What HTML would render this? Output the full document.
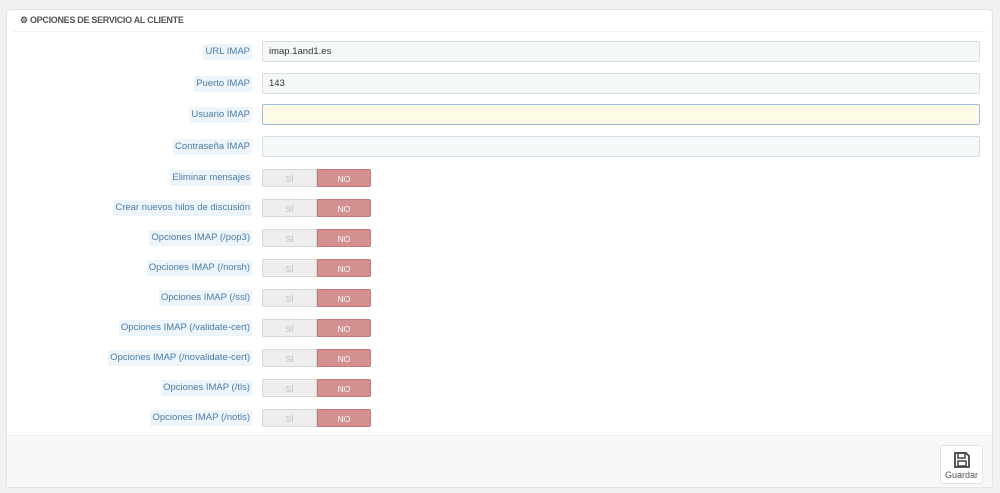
<!DOCTYPE html>
<html><head><style>
body{margin:0;width:1000px;height:493px;background:#eff1f2;font-family:"Liberation Sans",sans-serif;font-size:10px;position:relative;overflow:hidden}
.panel{position:absolute;left:6px;top:9px;width:987px;height:479px;background:#fff;border:1px solid #e1e4e6;border-radius:4px;box-sizing:border-box}
.hd{position:absolute;left:6px;right:6px;top:0;height:21px;border-bottom:1px solid #eef0f1;font-size:9px;font-weight:bold;color:#555;line-height:21px;padding-left:7px;letter-spacing:-.3px}
.ft{position:absolute;left:0;right:0;bottom:0;height:51px;background:#f8f8f8;border-top:1px solid #eee}
.lab{position:absolute;right:748px;height:16px;line-height:16px;padding:0 2px;background:#eef5fa;color:#4a7ca8;font-size:9.5px;white-space:nowrap}
.inp{position:absolute;left:262px;width:718px;height:21px;box-sizing:border-box;background:#f5f8f9;border:1px solid #d8dee2;border-radius:2px;font-size:9.5px;color:#333;line-height:19px;padding-left:6px}
.sw{position:absolute;left:262px;width:109px;height:18px;font-size:8.5px;line-height:18px;text-align:center}
.sw .s{position:absolute;left:0;width:55px;height:18px;background:#eeeeee;border:1px solid #d8d8d8;box-sizing:border-box;border-radius:2px 0 0 2px;color:#bbb}
.sw .n{position:absolute;left:55px;width:54px;height:18px;background:#d48f91;border:1px solid #c47a7c;box-sizing:border-box;border-radius:0 2px 2px 0;color:#fff}
.btn{position:absolute;left:940px;top:445px;width:43px;height:39px;background:#fff;border:1px solid #e2e2e2;border-radius:3px;box-sizing:border-box;text-align:center;font-size:9px;color:#555}
</style></head><body>
<div class="panel"><div class="hd">⚙ OPCIONES DE SERVICIO AL CLIENTE</div><div class="ft"></div></div>
<div class="lab" style="top:44px">URL IMAP</div><div class="inp" style="top:41px">imap.1and1.es</div>
<div class="lab" style="top:76px">Puerto IMAP</div><div class="inp" style="top:73px">143</div>
<div class="lab" style="top:107px">Usuario IMAP</div><div class="inp" style="top:104px;background:#fdfbe5;border-color:#9fc0dd"></div>
<div class="lab" style="top:139px">Contraseña IMAP</div><div class="inp" style="top:136px"></div>
<div class="lab" style="top:170px">Eliminar mensajes</div><div class="sw" style="top:169px"><div class="s">SÍ</div><div class="n">NO</div></div>
<div class="lab" style="top:200px">Crear nuevos hilos de discusión</div><div class="sw" style="top:199px"><div class="s">SÍ</div><div class="n">NO</div></div>
<div class="lab" style="top:230px">Opciones IMAP (/pop3)</div><div class="sw" style="top:229px"><div class="s">SÍ</div><div class="n">NO</div></div>
<div class="lab" style="top:260px">Opciones IMAP (/norsh)</div><div class="sw" style="top:259px"><div class="s">SÍ</div><div class="n">NO</div></div>
<div class="lab" style="top:290px">Opciones IMAP (/ssl)</div><div class="sw" style="top:289px"><div class="s">SÍ</div><div class="n">NO</div></div>
<div class="lab" style="top:320px">Opciones IMAP (/validate-cert)</div><div class="sw" style="top:319px"><div class="s">SÍ</div><div class="n">NO</div></div>
<div class="lab" style="top:350px">Opciones IMAP (/novalidate-cert)</div><div class="sw" style="top:349px"><div class="s">SÍ</div><div class="n">NO</div></div>
<div class="lab" style="top:380px">Opciones IMAP (/tls)</div><div class="sw" style="top:379px"><div class="s">SÍ</div><div class="n">NO</div></div>
<div class="lab" style="top:410px">Opciones IMAP (/notls)</div><div class="sw" style="top:409px"><div class="s">SÍ</div><div class="n">NO</div></div>
<div class="btn"><svg width="18" height="18" viewBox="0 0 18 18" style="margin-top:5px"><path d="M2 2h11l3 3v11H2z" fill="none" stroke="#444" stroke-width="1.8"/><rect x="5" y="2" width="7" height="5" fill="none" stroke="#444" stroke-width="1.5"/><rect x="5" y="10" width="8" height="5" fill="none" stroke="#444" stroke-width="1.5"/></svg><div style="margin-top:-1px">Guardar</div></div>
</body></html>
